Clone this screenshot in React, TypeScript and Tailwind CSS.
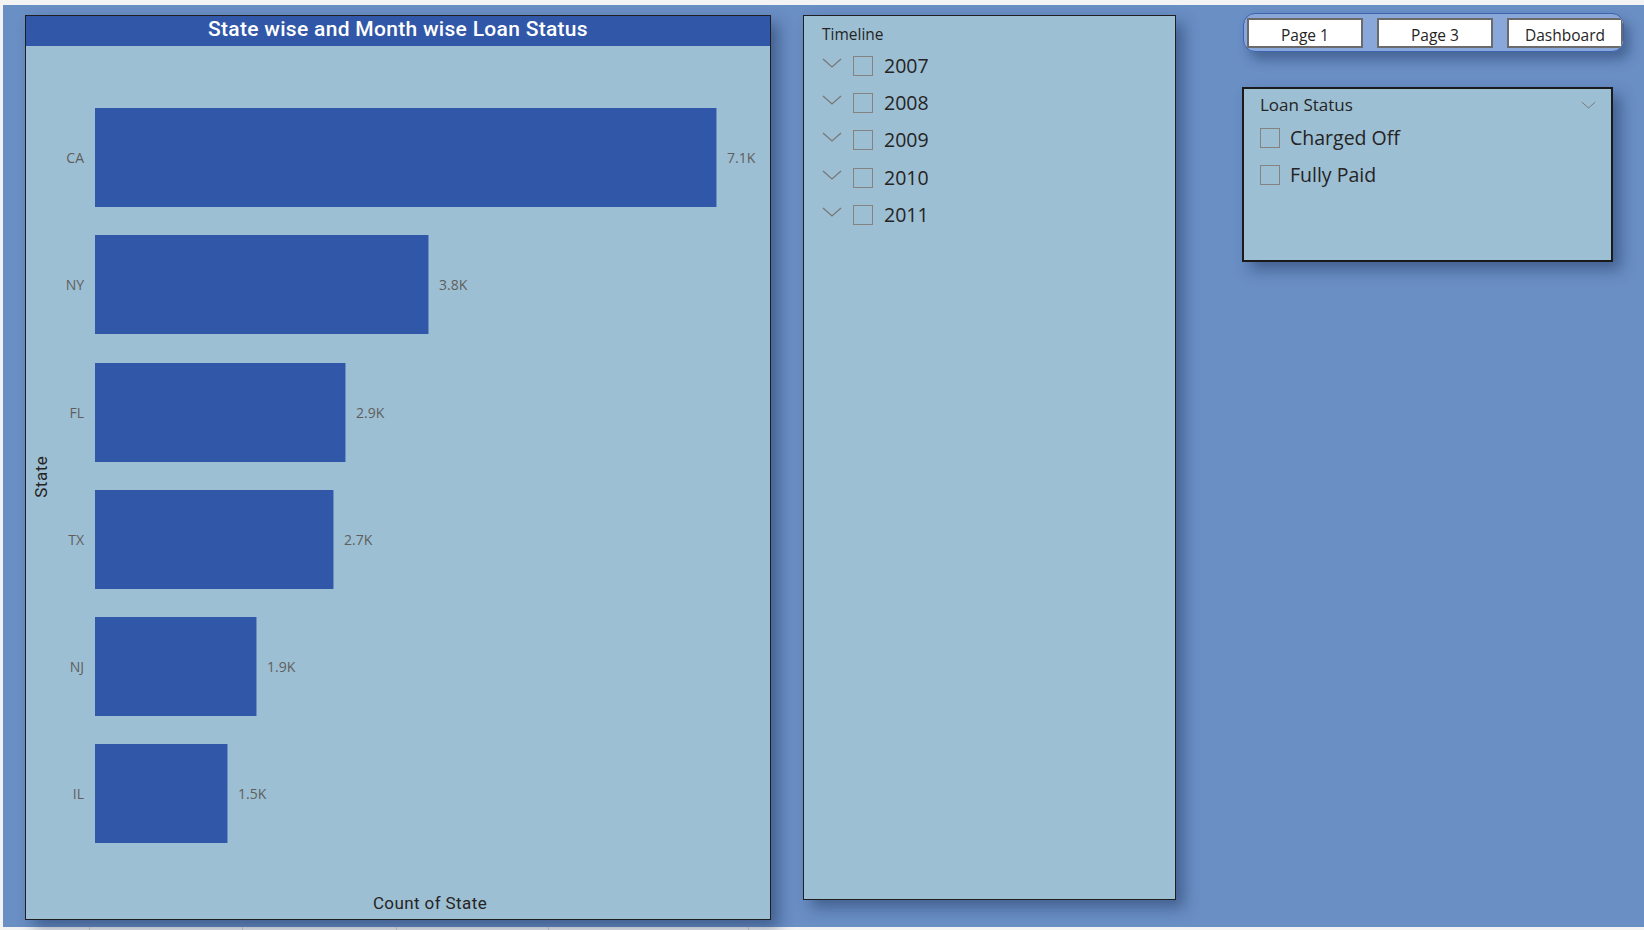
import React from "react";

const bars = [
  { state: "CA", width: 622, label: "7.1K" },
  { state: "NY", width: 334, label: "3.8K" },
  { state: "FL", width: 251, label: "2.9K" },
  { state: "TX", width: 239, label: "2.7K" },
  { state: "NJ", width: 162, label: "1.9K" },
  { state: "IL", width: 133, label: "1.5K" },
];

const years = ["2007", "2008", "2009", "2010", "2011"];

const segoe = { fontFamily: '"Segoe UI", "Open Sans", sans-serif' };
const din = { fontFamily: 'Roboto, "Liberation Sans", sans-serif' };

function Chevron({ className }: { className?: string }) {
  return (
    <svg viewBox="0 0 20 10" className={className} fill="none">
      <path d="M1 1 L10 9 L19 1" stroke="#7a7876" strokeWidth="1.3" />
    </svg>
  );
}

function Checkbox() {
  return <div className="w-[20px] h-[20px] border-[1.5px] border-[#858381] shrink-0"></div>;
}

function BarChart() {
  return (
    <div className="mt-[10px] w-[746px] h-[905px] bg-[#9dbfd4] border border-[#1f1f1f] flex flex-col shadow-[8px_8px_14px_rgba(20,40,80,0.45)]">
      <div
        className="h-[30px] pb-[2px] bg-[#3157a8] text-white text-[21px] font-medium flex items-center justify-center tracking-[0.3px]"
        style={din}
      >
        State wise and Month wise Loan Status
      </div>
      <div className="flex-1 flex">
        <div className="w-[32px] pt-[16px] flex items-center justify-center">
          <span className="-rotate-90 text-[17px] text-[#252423] whitespace-nowrap tracking-[0.5px]" style={din}>
            State
          </span>
        </div>
        <div className="flex-1 flex flex-col pt-[62px] gap-[28.3px]">
          {bars.map((b) => (
            <div key={b.state} className="flex items-center h-[99px]">
              <span className="w-[26px] text-right text-[14px] text-[#605e5c]" style={segoe}>
                {b.state}
              </span>
              <div
                className="ml-[11px] h-[99px] bg-[#3157a8] border-r border-[#6a8fc5]"
                style={{ width: b.width }}
              ></div>
              <span className="ml-[10px] text-[14px] text-[#605e5c]" style={segoe}>
                {b.label}
              </span>
            </div>
          ))}
        </div>
      </div>
      <div className="pl-[68px] pr-[4px] pb-[3px] text-center text-[17px] text-[#252423] tracking-[0.4px]" style={din}>
        Count of State
      </div>
    </div>
  );
}

function Timeline() {
  return (
    <div
      className="mt-[10px] ml-[32px] w-[373px] h-[885px] bg-[#9dbfd4] border border-[#1f1f1f] shadow-[8px_8px_14px_rgba(20,40,80,0.45)] pl-[18px] pt-[8px]"
      style={segoe}
    >
      <div className="text-[15.5px] text-[#252423] leading-[20px]">Timeline</div>
      <div className="mt-[3px] flex flex-col">
        {years.map((y) => (
          <div key={y} className="h-[37.3px] flex items-center">
            <Chevron className="w-[20px] h-[10px] -mt-[6px]" />
            <div className="ml-[11px]">
              <Checkbox />
            </div>
            <span className="ml-[11px] text-[19.5px] text-[#252423] leading-none">{y}</span>
          </div>
        ))}
      </div>
    </div>
  );
}

function NavButtons() {
  const names = ["Page 1", "Page 3", "Dashboard"];
  return (
    <div className="w-[381px] h-[39px] rounded-[12px] border border-[#3d62b0] bg-[#89a7d8] flex items-center pl-[3px] gap-[14px] shadow-[6px_8px_12px_rgba(20,40,80,0.4)] overflow-hidden">
      {names.map((n) => (
        <div
          key={n}
          className="w-[116px] h-[30px] shrink-0 bg-white border-2 border-[#6b6b6b] flex items-center justify-center pt-[6px] text-[15.5px] text-[#252423]"
          style={segoe}
        >
          {n}
        </div>
      ))}
    </div>
  );
}

function LoanStatus() {
  return (
    <div
      className="mt-[35px] -ml-[1px] w-[371px] h-[175px] bg-[#9dbfd4] border-2 border-[#1a1a1a] shadow-[8px_8px_14px_rgba(20,40,80,0.45)] pl-[16px] pr-[15px] pt-[3px]"
      style={segoe}
    >
      <div className="flex items-center justify-between">
        <span className="text-[17px] text-[#252423]">Loan Status</span>
        <Chevron className="w-[15px] h-[8px]" />
      </div>
      <div className="mt-[2px] flex flex-col">
        {["Charged Off", "Fully Paid"].map((s) => (
          <div key={s} className="h-[37px] flex items-center">
            <Checkbox />
            <span className="ml-[10px] text-[19.5px] text-[#252423]">{s}</span>
          </div>
        ))}
      </div>
    </div>
  );
}

export default function App() {
  return (
    <div className="w-[1644px] h-[930px] bg-[#f3f3f3] overflow-hidden relative">
      <div className="ml-[3px] mt-[5px] h-[922px] bg-[#6a8fc5] flex items-start pl-[22px]">
        <BarChart />
        <Timeline />
        <div className="ml-[67px] mt-[8px] flex flex-col">
          <NavButtons />
          <LoanStatus />
        </div>
      </div>
      <div className="flex h-[3px]">
        {[89, 242, 396, 548, 748].map((x) => (
          <div key={x} className="absolute bottom-0 w-px h-[3px] bg-[#b0b0b0]" style={{ left: x }}></div>
        ))}
      </div>
    </div>
  );
}
